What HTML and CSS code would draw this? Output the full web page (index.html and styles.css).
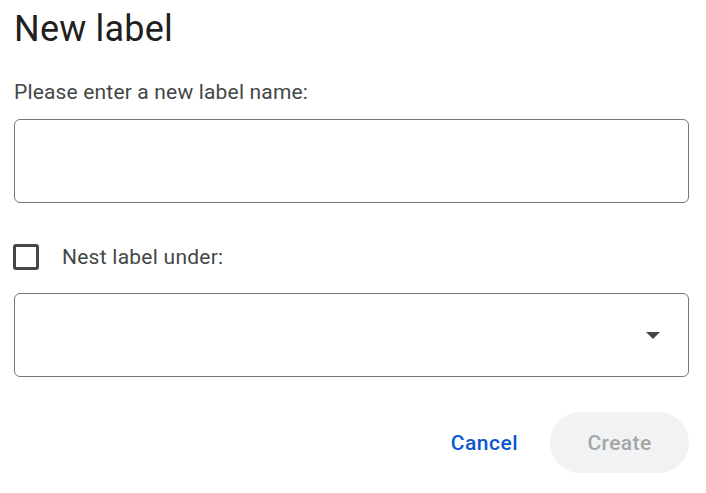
FILE: index.html
```html
<!DOCTYPE html>
<html>
<head>
<meta charset="utf-8">
<link rel="stylesheet" href="styles.css">
</head>
<body>
<div class="dialog">
  <h1 class="title">New label</h1>
  <div class="field-label">Please enter a new label name:</div>
  <div class="textbox"></div>
  <div class="check-row">
    <span class="checkbox"></span>
    <span class="check-text">Nest label under:</span>
  </div>
  <div class="select">
    <svg class="arrow" width="14" height="7" viewBox="0 0 14 7"><path d="M0 0h14L7 7z" fill="#444746"/></svg>
  </div>
  <div class="actions">
    <button class="btn-text">Cancel</button>
    <button class="btn-create">Create</button>
  </div>
</div>
</body>
</html>
```
FILE: styles.css
```css
html, body {
  margin: 0;
  padding: 0;
  background: #ffffff;
}
body {
  font-family: Roboto, "Liberation Sans", Arial, sans-serif;
  color: #444746;
}
.dialog {
  padding: 9px 17px 0 14px;
  display: flex;
  flex-direction: column;
}
.title {
  margin: 0;
  font-size: 36px;
  line-height: 40px;
  font-weight: 400;
  letter-spacing: 0.2px;
  color: #1f1f1f;
  -webkit-text-stroke: 0;
}
.field-label {
  margin-top: 31px;
  font-size: 21px;
  line-height: 24px;
  letter-spacing: 0.17px;
  color: #444746;
}
.textbox {
  margin-top: 15px;
  height: 84px;
  box-sizing: border-box;
  border: 1.3px solid #747775;
  border-radius: 6px;
}
.check-row {
  margin-top: 40px;
  display: flex;
  align-items: center;
  height: 27px;
}
.checkbox {
  width: 26px;
  height: 26px;
  box-sizing: border-box;
  border: 3px solid #444746;
  border-radius: 3px;
  margin-left: -1px;
}
.check-text {
  margin-left: 23px;
  font-size: 21px;
  line-height: 24px;
  letter-spacing: 0.25px;
  color: #444746;
}
.select {
  margin-top: 23px;
  height: 84px;
  box-sizing: border-box;
  border: 1.3px solid #747775;
  border-radius: 6px;
  display: flex;
  align-items: center;
  justify-content: flex-end;
  padding-right: 28px;
}
.arrow {
  display: block;
}
.actions {
  margin-top: 35px;
  display: flex;
  justify-content: flex-end;
  align-items: center;
  gap: 32px;
}
.btn-text {
  border: none;
  background: none;
  padding: 0;
  font-family: inherit;
  font-size: 21px;
  font-weight: 500;
  letter-spacing: 0.5px;
  color: #0b57d0;
}
.btn-create {
  border: none;
  width: 139px;
  height: 61px;
  border-radius: 31px;
  background: #f1f2f4;
  font-family: inherit;
  font-size: 21px;
  font-weight: 500;
  letter-spacing: 0.4px;
  color: #a3a5a7;
  padding: 0;
}
```
